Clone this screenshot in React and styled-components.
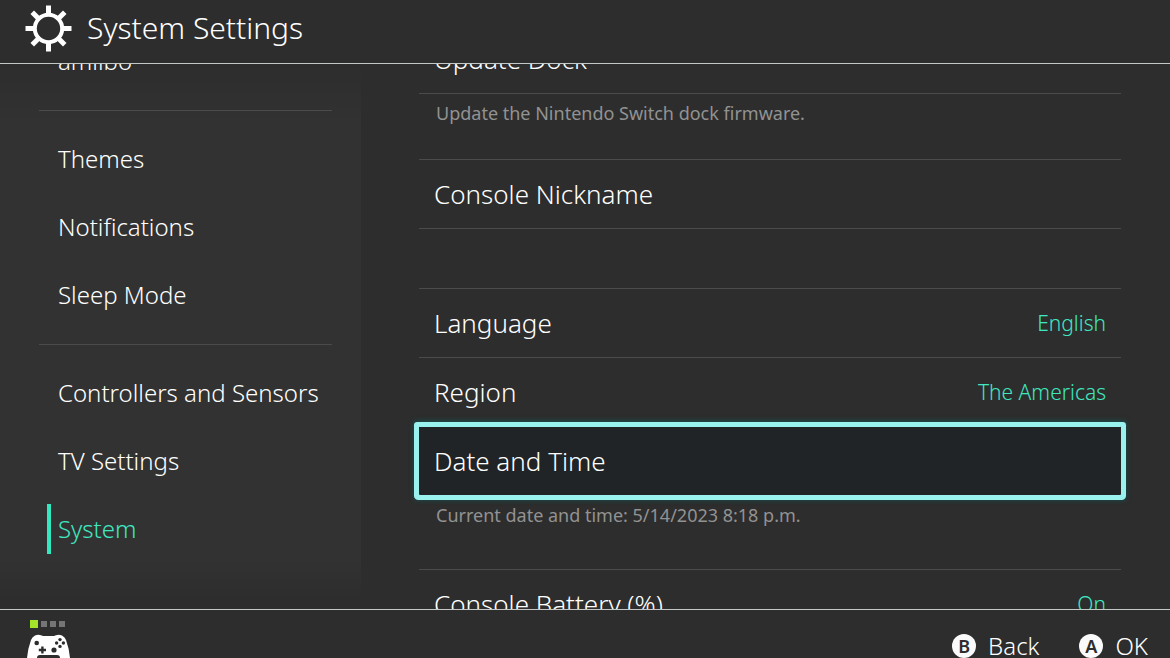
import React from "react";
import styled, { createGlobalStyle, css } from "styled-components";

const GlobalStyle = createGlobalStyle`
  * {
    box-sizing: border-box;
  }
  body {
    margin: 0;
    background: #2d2d2d;
    color: #fff;
    font-family: "Noto Sans", "Open Sans", sans-serif;
    font-weight: 300;
  }
  button {
    border: 0;
    background: none;
    color: inherit;
    font: inherit;
    text-align: left;
    cursor: pointer;
  }
`;

const Screen = styled.div`
  display: flex;
  flex-direction: column;
  height: 100vh;
  overflow: hidden;
`;

const Header = styled.header`
  display: flex;
  flex: none;
  align-items: center;
  gap: 15px;
  height: 64px;
  padding: 0 25px 7px;
  border-bottom: 1px solid #c4c8c6;
  h1 {
    margin: 0;
    font-size: 30px;
    font-weight: 300;
    line-height: 40px;
  }
`;

const Body = styled.div`
  display: flex;
  flex: 1;
  min-height: 0;
`;

const Sidebar = styled.nav`
  flex: none;
  width: 361px;
  padding: 0 29px 0 39px;
  overflow: hidden;
  background: linear-gradient(
    #2d2d2d,
    #323232 60px,
    #323232 calc(100% - 50px),
    #2d2d2d calc(100% - 8px)
  );
`;

const SideList = styled.div`
  margin-top: -37px;
`;

const SideGroup = styled.div`
  padding: 14px 0 15px;
  & + & {
    border-top: 1px solid #4b4b4b;
  }
  &:first-child {
    padding-top: 0;
  }
`;

const SideItem = styled.a`
  display: flex;
  align-items: center;
  height: 68px;
  padding-left: 8px;
  color: inherit;
  font-size: 24px;
  text-decoration: none;
  span {
    padding-left: 7px;
    border-left: 4px solid transparent;
    line-height: 50px;
  }
  ${props =>
    props.$active &&
    css`
      color: #3fe8c0;
      span {
        border-color: #32e8c0;
      }
    `}
`;

const Main = styled.main`
  flex: 1;
  min-width: 0;
  padding: 0 49px 0 58px;
  overflow: hidden;
`;

const MainList = styled.div`
  margin-top: -40px;
`;

const Group = styled.section`
  margin-bottom: ${props => props.$space}px;
`;

const Rows = styled.div`
  border-bottom: 1px solid #4b4b4b;
`;

const Row = styled.button`
  display: flex;
  align-items: center;
  justify-content: space-between;
  width: 100%;
  height: 69px;
  padding: 0 15px;
  && {
    border-top: 1px solid #4b4b4b;
  }
  font-size: 26px;
  ${props =>
    props.$selected &&
    css`
      && {
        border-top-color: #9af2ee;
        background: #202427;
      }
      border-radius: 1px;
      box-shadow: 1px 0 0 4px #9af2ee, -1px 0 0 4px #9af2ee,
        0 1px 0 4px #9af2ee, 0 0 5px 5px #17504f;
    `}
`;

const Value = styled.span`
  color: #3fe8c0;
  font-size: 21px;
`;

const Help = styled.p`
  margin: 0;
  padding: 7px 17px 0;
  color: #929292;
  font-size: 18px;
  font-weight: 400;
  line-height: 24px;
`;

const Footer = styled.footer`
  display: flex;
  flex: none;
  align-items: flex-start;
  justify-content: space-between;
  height: 49px;
  padding: 0 22px 0 27px;
  border-top: 1px solid #c4c8c6;
`;

const Player = styled.div`
  padding-top: 10px;
  svg {
    display: block;
    margin-top: 6px;
  }
`;

const Lights = styled.div`
  display: flex;
  align-items: center;
  gap: 3px;
  padding-left: 3px;
`;

const Light = styled.i`
  width: ${props => (props.$on ? 8 : 6)}px;
  height: ${props => (props.$on ? 8 : 6)}px;
  background: ${props => (props.$on ? "#a3e32a" : "#757575")};
`;

const Actions = styled.div`
  display: flex;
  gap: 40px;
  padding-top: 20px;
`;

const Action = styled.button`
  display: flex;
  align-items: center;
  gap: 12px;
  padding: 0;
  font-size: 24px;
  line-height: 32px;
  b {
    width: 24px;
    height: 24px;
    border-radius: 50%;
    background: #fafafa;
    color: #2d2d2d;
    font-size: 18px;
    font-weight: 600;
    line-height: 24px;
    text-align: center;
  }
`;

const teeth = [0, 45, 90, 135, 180, 225, 270, 315];

const GearIcon = () => (
  <svg width="47" height="47" viewBox="0 0 47 47" aria-hidden="true">
    <circle cx="23.5" cy="23.5" r="13.7" fill="none" stroke="#fff" strokeWidth="4" />
    {teeth.map(a => (
      <rect
        key={a}
        x="21"
        y="0.5"
        width="5"
        height="8.5"
        fill="#fff"
        transform={`rotate(${a} 23.5 23.5)`}
      />
    ))}
  </svg>
);

const PadIcon = () => (
  <svg width="43" height="34" viewBox="0 0 43 34" aria-hidden="true">
    <path
      fill="#fff"
      d="M8 1.5Q11 0 14 1.2L16 2H27L29 1.2Q32 0 35 1.5Q38 3 39 6Q42 14 43 24Q43 33 38 33Q35 33 31 24H12Q8 33 5 33Q0 33 0 24Q1 14 4 6Q5 3 8 1.5Z"
    />
    <g fill="#2d2d2d">
      <circle cx="9.7" cy="9" r="2.3" />
      <circle cx="27" cy="16" r="2.6" />
      <path d="M14.2 12.5h2.4v2.3H19v2.4h-2.4v2.3h-2.4v-2.3h-2.4v-2.4h2.4z" />
      <circle cx="33" cy="5.6" r="1.7" />
      <circle cx="33" cy="12.4" r="1.7" />
      <circle cx="29.6" cy="9" r="1.7" />
      <circle cx="36.4" cy="9" r="1.7" />
      <path d="M10 24Q10 21 13 21H30Q33 21 33 24Z" />
    </g>
  </svg>
);

const sideGroups = [
  ["amiibo"],
  ["Themes", "Notifications", "Sleep Mode"],
  ["Controllers and Sensors", "TV Settings", "System"]
];

const groups = [
  {
    rows: [{ label: "Update Dock" }],
    help: "Update the Nintendo Switch dock firmware.",
    space: 34
  },
  { rows: [{ label: "Console Nickname" }], space: 59 },
  {
    rows: [
      { label: "Language", value: "English" },
      { label: "Region", value: "The Americas" },
      { label: "Date and Time", selected: true }
    ],
    help: "Current date and time: 5/14/2023 8:18 p.m.",
    space: 42
  },
  { rows: [{ label: "Console Battery (%)", value: "On" }], space: 0 }
];

const App = () => {
  return (
    <Screen>
      <GlobalStyle />
      <Header>
        <GearIcon />
        <h1>System Settings</h1>
      </Header>
      <Body>
        <Sidebar>
          <SideList>
            {sideGroups.map((items, k) => (
              <SideGroup key={k}>
                {items.map(name => (
                  <SideItem key={name} href="#" $active={name === "System"}>
                    <span>{name}</span>
                  </SideItem>
                ))}
              </SideGroup>
            ))}
          </SideList>
        </Sidebar>
        <Main>
          <MainList>
            {groups.map((g, k) => (
              <Group key={k} $space={g.space}>
                <Rows>
                  {g.rows.map(r => (
                    <Row key={r.label} type="button" $selected={r.selected}>
                      {r.label}
                      {r.value && <Value>{r.value}</Value>}
                    </Row>
                  ))}
                </Rows>
                {g.help && <Help>{g.help}</Help>}
              </Group>
            ))}
          </MainList>
        </Main>
      </Body>
      <Footer>
        <Player>
          <Lights>
            <Light $on />
            <Light />
            <Light />
            <Light />
          </Lights>
          <PadIcon />
        </Player>
        <Actions>
          <Action type="button">
            <b>B</b>Back
          </Action>
          <Action type="button">
            <b>A</b>OK
          </Action>
        </Actions>
      </Footer>
    </Screen>
  );
};

export default App;
